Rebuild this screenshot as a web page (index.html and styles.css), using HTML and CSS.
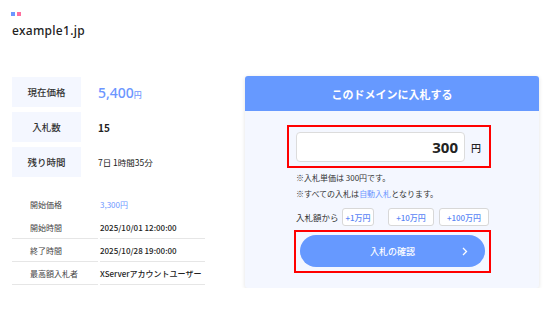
FILE: index.html
```html
<!DOCTYPE html>
<html lang="ja">
<head>
<meta charset="utf-8">
<link rel="stylesheet" href="styles.css">
</head>
<body>
<header class="site">
  <div class="logo"><span class="sq blue"></span><span class="sq pink"></span></div>
  <h1 class="domain">example1.jp</h1>
</header>
<main class="main">
  <section class="info">
    <div class="stats">
      <div class="stat"><div class="stat-label">現在価格</div><div class="stat-value price">5,400<small>円</small></div></div>
      <div class="stat"><div class="stat-label">入札数</div><div class="stat-value bold">15</div></div>
      <div class="stat"><div class="stat-label">残り時間</div><div class="stat-value small">7日 1時間35分</div></div>
    </div>
    <div class="details">
      <div class="row first"><div class="cell label">開始価格</div><div class="cell value blue">3,300円</div></div>
      <div class="row"><div class="cell label">開始時間</div><div class="cell value">2025/10/01 12:00:00</div></div>
      <div class="row"><div class="cell label">終了時間</div><div class="cell value">2025/10/28 19:00:00</div></div>
      <div class="row"><div class="cell label">最高額入札者</div><div class="cell value">XServerアカウントユーザー</div></div>
    </div>
  </section>
  <section class="panel">
    <div class="panel-head">このドメインに入札する</div>
    <div class="panel-body">
      <div class="content">
        <div class="mark amount">
          <div class="input">300</div>
          <span class="yen">円</span>
        </div>
        <p class="note">※入札単価は 300円です。</p>
        <p class="note">※すべての入札は<span class="link">自動入札</span>となります。</p>
        <div class="adds">
          <span class="adds-label">入札額から</span>
          <button class="add w1">+1万円</button>
          <button class="add w2">+10万円</button>
          <button class="add w3">+100万円</button>
        </div>
        <div class="mark confirm-wrap">
          <button class="confirm"><span>入札の確認</span>
            <svg class="chev" width="6" height="9" viewBox="0 0 6 9"><path d="M1 1 L4.5 4.5 L1 8" fill="none" stroke="#fff" stroke-width="1.3"/></svg>
          </button>
        </div>
      </div>
    </div>
  </section>
</main>
</body>
</html>
```
FILE: styles.css
```css
* { box-sizing: border-box; }
body {
  margin: 0;
  background: #fff;
  font-family: "Noto Sans CJK JP", "Noto Sans", sans-serif;
  color: #222;
}
.site { padding: 12px 0 0 11px; }
.logo { display: flex; gap: 2px; height: 4px; }
.sq { width: 4px; height: 4px; display: block; }
.sq.blue { background: #6c96ff; }
.sq.pink { background: #ff6f9e; }
.domain {
  margin: 7px 0 0 1px;
  font-family: "Noto Sans", sans-serif;
  font-weight: 500;
  font-size: 12px;
  line-height: 15px;
  color: #222;
  letter-spacing: 0.3px;
}
.main {
  display: flex;
  padding: 0 0 0 12px;
  margin-top: 38px;
  gap: 40px;
}
.info { width: 193px; margin-top: 1px; }
.stats { display: flex; flex-direction: column; gap: 5px; }
.stat { display: flex; align-items: center; height: 30px; }
.stat-label {
  width: 69px; height: 30px;
  background: #f4f7ff;
  display: flex; align-items: center; justify-content: center;
  font-size: 9.5px; font-weight: 500; color: #333;
}
.stat-value { margin-left: 17px; font-size: 9px; color: #222; }
.stat-value.price { color: #6c96ff; font-size: 14px; font-family: "Noto Sans", sans-serif; font-weight: 500; }
.stat-value.price small { font-size: 8px; font-family: "Noto Sans CJK JP", sans-serif; }
.stat-value.bold { font-weight: 700; font-size: 10px; }
.stat-value.small { font-size: 8.5px; }
.details { margin-top: 16px; }
.row { display: flex; gap: 2px; height: 23px; }
.cell { display: flex; align-items: center; font-size: 8px; border-bottom: 1px solid #e6e6e6; white-space: nowrap; }
.row.first .cell { border-bottom-color: transparent; }
.cell.label { width: 86px; padding-left: 18px; color: #444; }
.cell.value { width: 105px; color: #222; font-weight: 500; }
.cell.value.blue { color: #6c96ff; font-weight: 400; }
.panel {
  width: 294px;
  background: #f4f7ff;
  border-radius: 3px;
  box-shadow: 0 1px 4px rgba(0, 0, 0, 0.12);
  overflow: hidden;
}
.panel-head {
  height: 35px;
  background: #6699ff;
  color: #fff;
  font-weight: 700;
  font-size: 11px;
  display: flex; align-items: center; justify-content: center;
}
.panel-body { padding: 14px 0 15px 42px; }
.content { width: 204px; }
.mark { border: 2px solid #f00; }
.amount {
  display: flex; align-items: center;
  padding: 5px 8px 4px 7px;
  gap: 6px;
}
.input {
  flex: 1;
  height: 30px;
  background: #fff;
  border: 1px solid #dcdcdc;
  border-radius: 4px;
  display: flex; align-items: center; justify-content: flex-end;
  padding-right: 6px;
  font-family: "Noto Sans", sans-serif;
  font-weight: 700;
  font-size: 15px;
  color: #222;
}
.yen { font-size: 10px; font-weight: 500; color: #222; }
.note { margin: 0; padding-left: 9px; font-size: 8px; line-height: 16px; color: #333; }
.note:first-of-type { margin-top: 2px; }
.link { color: #6c96ff; }
.adds { display: flex; align-items: center; padding-left: 9px; margin-top: 6px; height: 18px; }
.adds-label { font-size: 8.5px; color: #333; width: 46px; }
.add {
  height: 18px;
  background: #fff;
  border: 1px solid #d8d8d8;
  border-radius: 3px;
  color: #5a86f5;
  font-family: "Noto Sans CJK JP", sans-serif;
  font-size: 8px;
  font-weight: 500;
  padding: 0;
}
.w1 { width: 32px; }
.w2 { width: 46px; margin-left: 14px; }
.w3 { width: 50px; margin-left: 5px; }
.confirm-wrap { margin: 4px 0 0 7px; width: 197px; padding: 3px 4px 4px 4px; }
.confirm {
  width: 100%; height: 32px;
  border: none; border-radius: 16px;
  background: #6699ff;
  color: #fff;
  font-family: "Noto Sans CJK JP", sans-serif;
  font-size: 9px;
  font-weight: 500;
  display: flex; align-items: center; justify-content: center;
  position: relative;
  padding: 0;
}
.chev { position: absolute; right: 17px; top: 11.5px; }
```
